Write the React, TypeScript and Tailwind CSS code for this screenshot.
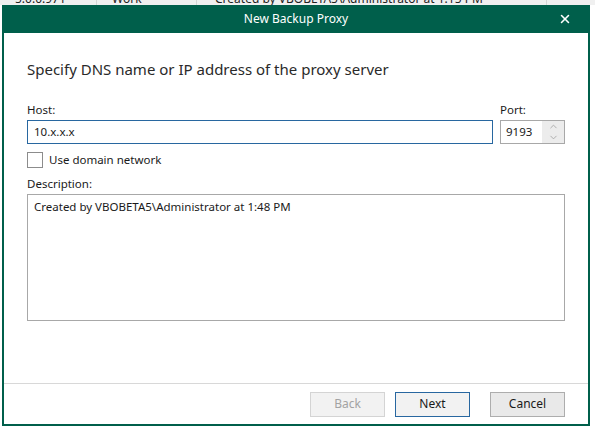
import { X, ChevronUp, ChevronDown } from 'lucide-react';

const font = { fontFamily: '"Noto Sans", "Open Sans", sans-serif' };

export default function App() {
  return (
    <div className="w-[595px] h-[428px] bg-white overflow-hidden text-[#1a1a1a]" style={font}>
      {/* Window behind the dialog, only its bottom edge shows */}
      <div className="h-[5px] bg-[#f0f0f0] overflow-hidden flex text-[12px] text-[#222] leading-[16px]">
        <div className="w-[97px] shrink-0 border-r border-[#d6d6d6] pl-[15px] -mt-[9px]">5.0.0.971</div>
        <div className="w-[100px] shrink-0 border-r border-[#d6d6d6] pl-[15px] -mt-[9px]">Work</div>
        <div className="w-[350px] shrink-0 border-r border-[#d6d6d6] pl-[18px] -mt-[9px]">Created by VBOBETA5\Administrator at 1:15 PM</div>
      </div>

      {/* Dialog */}
      <div className="ml-[2px] w-[588px] h-[421px] flex flex-col border-x-2 border-b-2 border-[#005f4b] bg-white">
        <div className="h-[28px] shrink-0 bg-[#005f4b] -mx-[2px] flex items-center justify-center relative">
          <span className="text-white text-[12px]">New Backup Proxy</span>
          <X className="absolute right-[18px] top-[7px] text-white" size={14} strokeWidth={2.6} />
        </div>

        <div className="h-[350px] shrink-0 px-[23px] flex flex-col text-[11.5px]">
          <div className="mt-[25px] text-[15px] leading-[22px] text-[#2a2a2a]">
            Specify DNS name or IP address of the proxy server
          </div>

          <div className="mt-[22px] flex gap-[7px]">
            <div className="w-[466px] flex flex-col">
              <div className="leading-[16px]">Host:</div>
              <div className="mt-[2px] h-[24px] border border-[#2867a0] flex items-center px-[6px]">
                10.x.x.x
              </div>
            </div>
            <div className="w-[65px] flex flex-col">
              <div className="leading-[16px]">Port:</div>
              <div className="mt-[2px] h-[24px] border border-[#a8a8a8] flex">
                <div className="flex-1 flex items-center pl-[5px]">9193</div>
                <div className="w-[22px] bg-[#ececec] flex flex-col items-center justify-center text-[#a8a8a8]">
                  <ChevronUp size={11} strokeWidth={2} />
                  <ChevronDown size={11} strokeWidth={2} />
                </div>
              </div>
            </div>
          </div>

          <div className="mt-[8px] flex items-center gap-[6px]">
            <div className="w-[16px] h-[16px] border border-[#8c8c8c] bg-white" />
            <span className="leading-[16px]">Use domain network</span>
          </div>

          <div className="mt-[8px] leading-[16px]">Description:</div>
          <div className="mt-[2px] h-[127px] border border-[#a8a8a8] px-[6px] pt-[3px] leading-[18px]">
            Created by VBOBETA5\Administrator at 1:48 PM
          </div>
        </div>

        <div className="h-px shrink-0 bg-[#d8d8d8]" />

        <div className="flex-1 flex items-center justify-end pr-[23px] text-[12px]">
          <button className="w-[75px] h-[25px] border border-[#d4d4d4] bg-[#f2f2f2] text-[#a3a3a3]">Back</button>
          <button className="ml-[10px] w-[75px] h-[25px] border border-[#2867a0] bg-[#f2f2f2] text-[#1a1a1a]">Next</button>
          <button className="ml-[20px] w-[75px] h-[25px] border border-[#adadad] bg-[#e9e9e9] text-[#1a1a1a]">Cancel</button>
        </div>
      </div>
    </div>
  );
}
